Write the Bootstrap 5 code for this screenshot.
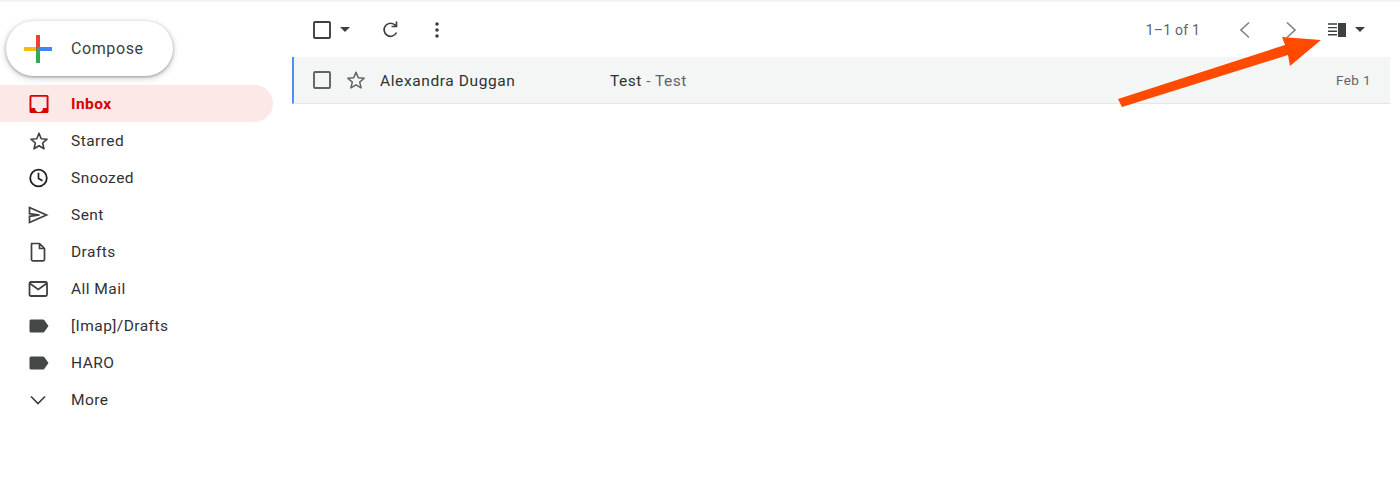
<!DOCTYPE html>
<html lang="en">
<head>
    <meta charset="UTF-8">
    <meta name="viewport" content="width=device-width, initial-scale=1.0">
    <title>Inbox</title>
    <link href="https://cdn.jsdelivr.net/npm/bootstrap@5.3.3/dist/css/bootstrap.min.css" rel="stylesheet">
    <style>
        body {
            font-family: Roboto, "Liberation Sans", sans-serif;
            font-size: 15.5px;
            color: #202124;
            background: #fff;
            height: 503px;
            overflow: hidden;
            border-top: 2px solid #f1f3f4;
            position: relative;
        }
        .side-col { width: 292px; flex: none; padding-top: 19px; }
        .main-col { width: 1098px; flex: none; }
        .compose-btn {
            width: 167px;
            height: 55px;
            margin-left: 6px;
            margin-bottom: 9px;
            padding: 0 0 0 17px;
            gap: 18px;
            border: 0;
            border-radius: 28px;
            background: #fff;
            color: #3c4043;
            font-size: 16px;
            font-weight: 400;
            letter-spacing: .6px;
            box-shadow: 0 1px 3px rgba(60,64,67,.45), 0 2px 6px 1px rgba(60,64,67,.18);
        }
        .folder-list { margin: 0; padding: 0; list-style: none; }
        .folder-item {
            width: 273px;
            height: 37px;
            padding: 2px 0 0 28px;
            gap: 21px;
            color: #303134;
            letter-spacing: .45px;
            border-radius: 0 19px 19px 0;
        }
        .folder-item svg { flex: none; margin-top: -2px; }
        .folder-active { background: #fce8e6; color: #d90000; font-weight: 700; }
        .mail-tools { height: 55px; }
        .tool-glyph { flex: none; display: block; }
        .caret-down {
            width: 0; height: 0;
            border-left: 5px solid transparent;
            border-right: 5px solid transparent;
            border-top: 5px solid #3c4043;
        }
        .page-count { font-size: 14px; color: #5f6368; letter-spacing: .2px; padding-top: 1px; }
        .mail-row {
            height: 47px;
            background: #f4f6f6;
            border-left: 2px solid #4d90f0;
            border-bottom: 1px solid #e3e5e6;
            box-sizing: border-box;
        }
        .mail-from { width: 230px; letter-spacing: .6px; padding-top: 4px; color: #303134; }
        .mail-subject { letter-spacing: .5px; padding-top: 4px; color: #303134; }
        .mail-snippet { color: #5f6368; }
        .mail-date { font-size: 13.5px; color: #5f6368; margin-right: 19px; letter-spacing: .4px; }
        .orange-arrow { position: absolute; left: 0; top: -2px; pointer-events: none; }
    </style>
</head>
<body>
    <div class="d-flex">
        <div class="side-col">
            <button type="button" class="btn compose-btn d-flex align-items-center">
                <svg width="30" height="30" viewBox="0 0 30 30">
                    <rect x="13" y="1" width="4" height="14" fill="#ea4335"/>
                    <rect x="15" y="13" width="14" height="4" fill="#4285f4"/>
                    <rect x="13" y="15" width="4" height="14" fill="#34a853"/>
                    <rect x="1" y="13" width="12" height="4" fill="#fbbc04"/>
                </svg>
                Compose
            </button>
            <ul class="folder-list">
                <li class="folder-item folder-active d-flex align-items-center">
                    <svg width="22" height="22" viewBox="0 0 22 22"><path d="M3 2h16A1.500 1.500 0 0 1 20.500 3.500v15a1.500 1.500 0 0 1-1.500 1.500H3a1.500 1.500 0 0 1-1.500-1.500v-15A1.500 1.500 0 0 1 3 2zM3.400 3.800V15h3.700a3.900 3.900 0 0 0 7.800 0h3.700V3.800z" fill="#d90000" fill-rule="evenodd"/></svg>
                    Inbox
                </li>
                <li class="folder-item d-flex align-items-center">
                    <svg width="22" height="22" viewBox="0 0 22 22"><path d="M11 3.200l2.200 5.500 5.900.5-4.500 3.800 1.400 5.800-5-3.100-5 3.100 1.400-5.800-4.500-3.800 5.900-.5z" fill="none" stroke="#3c4043" stroke-width="1.600" stroke-linejoin="round"/></svg>
                    Starred
                </li>
                <li class="folder-item d-flex align-items-center">
                    <svg width="22" height="22" viewBox="0 0 22 22"><circle cx="10.500" cy="11" r="8.300" fill="none" stroke="#202124" stroke-width="1.800"/><path d="M10.500 5.800v5.600l4 2.400" fill="none" stroke="#202124" stroke-width="1.700"/></svg>
                    Snoozed
                </li>
                <li class="folder-item d-flex align-items-center">
                    <svg width="22" height="22" viewBox="0 0 22 22"><path d="M1.500 3.500L18.500 11 1.500 18.500v-6.200l10-1.300-10-1.300z" fill="none" stroke="#3c4043" stroke-width="1.700" stroke-linejoin="miter"/></svg>
                    Sent
                </li>
                <li class="folder-item d-flex align-items-center">
                    <svg width="22" height="22" viewBox="0 0 22 22"><path d="M3.500 2.500h8l5 5v11a1.300 1.300 0 0 1-1.300 1.300H4.800a1.300 1.300 0 0 1-1.300-1.300V3.800a1.300 1.300 0 0 1 1.300-1.300zM11.500 2.500v5h5" fill="none" stroke="#3c4043" stroke-width="1.700" stroke-linejoin="round"/></svg>
                    Drafts
                </li>
                <li class="folder-item d-flex align-items-center">
                    <svg width="22" height="22" viewBox="0 0 22 22"><rect x="1.500" y="4" width="17.500" height="14" rx="1.500" fill="none" stroke="#3c4043" stroke-width="1.800"/><path d="M2 5.500l8.250 6 8.250-6" fill="none" stroke="#3c4043" stroke-width="1.700"/></svg>
                    All Mail
                </li>
                <li class="folder-item d-flex align-items-center">
                    <svg width="22" height="22" viewBox="0 0 22 22"><path d="M3 4.500h12a1.500 1.500 0 0 1 1.200.6l4.300 5.900-4.300 5.900a1.500 1.500 0 0 1-1.200.6H3a1.500 1.500 0 0 1-1.500-1.500V6A1.500 1.500 0 0 1 3 4.500z" fill="#444746"/></svg>
                    [Imap]/Drafts
                </li>
                <li class="folder-item d-flex align-items-center">
                    <svg width="22" height="22" viewBox="0 0 22 22"><path d="M3 4.500h12a1.500 1.500 0 0 1 1.200.6l4.300 5.900-4.300 5.900a1.500 1.500 0 0 1-1.200.6H3a1.500 1.500 0 0 1-1.500-1.500V6A1.500 1.500 0 0 1 3 4.500z" fill="#444746"/></svg>
                    HARO
                </li>
                <li class="folder-item d-flex align-items-center">
                    <svg width="22" height="22" viewBox="0 0 22 22"><path d="M3 7.500l7 7 7-7" fill="none" stroke="#3c4043" stroke-width="1.700"/></svg>
                    More
                </li>
            </ul>
        </div>
        <div class="main-col">
            <div class="mail-tools d-flex align-items-center">
                <svg class="tool-glyph" style="margin-left:21px" width="18" height="18" viewBox="0 0 18 18"><rect x="1" y="1" width="16" height="16" rx="1" fill="none" stroke="#3c4043" stroke-width="1.900"/></svg>
                <span class="caret-down tool-glyph" style="margin-left:9px"></span>
                <svg class="tool-glyph" style="margin-left:31px" width="20" height="20" viewBox="0 0 20 20"><path d="M15.500 12.500a6.500 6.500 0 1 1-1-7M15.500 1.500v5h-5" fill="none" stroke="#3c4043" stroke-width="1.700"/></svg>
                <svg class="tool-glyph" style="margin-left:33px" width="6" height="18" viewBox="0 0 6 18"><circle cx="3" cy="3" r="1.800" fill="#3c4043"/><circle cx="3" cy="9" r="1.800" fill="#3c4043"/><circle cx="3" cy="15" r="1.800" fill="#3c4043"/></svg>
                <span class="page-count ms-auto">1–1 of 1</span>
                <svg class="tool-glyph" style="margin-left:39px" width="12" height="18" viewBox="0 0 12 18"><path d="M10 1.500L2 9l8 7.500" fill="none" stroke="#80868b" stroke-width="1.700"/></svg>
                <svg class="tool-glyph" style="margin-left:34px" width="12" height="18" viewBox="0 0 12 18"><path d="M2 1.500L10 9l-8 7.500" fill="none" stroke="#80868b" stroke-width="1.700"/></svg>
                <svg class="tool-glyph" style="margin-left:31px" width="18" height="14" viewBox="0 0 18 14"><path d="M0 1h9M0 4.600h9M0 8.200h9M0 11.800h9" stroke="#3c4043" stroke-width="1.400"/><rect x="10" y="0" width="8" height="14" fill="#3c4043"/></svg>
                <span class="caret-down tool-glyph" style="margin-left:9px;margin-right:25px"></span>
            </div>
            <div class="mail-row d-flex align-items-center">
                <svg class="tool-glyph" style="margin-left:19px" width="18" height="18" viewBox="0 0 18 18"><rect x="1" y="1" width="16" height="16" rx="1" fill="none" stroke="#5f6368" stroke-width="1.900"/></svg>
                <svg class="tool-glyph" style="margin-left:15px" width="20" height="20" viewBox="0 0 20 20"><path d="M10 2.200l2.300 5.500 5.900.5-4.500 3.900 1.400 5.800-5.100-3.100-5.100 3.100 1.400-5.800-4.500-3.900 5.900-.5z" fill="none" stroke="#5f6368" stroke-width="1.500" stroke-linejoin="round"/></svg>
                <span class="mail-from" style="margin-left:14px">Alexandra Duggan</span>
                <span class="mail-subject">Test <span class="mail-snippet">- Test</span></span>
                <span class="mail-date ms-auto">Feb 1</span>
            </div>
        </div>
    </div>
    <svg class="orange-arrow" width="1400" height="120" viewBox="0 0 1400 120"><polygon points="1118,99 1122,107 1288,55 1290,66 1321,40 1282,37 1285,45" fill="#ff4a00"/></svg>

    <script src="https://cdn.jsdelivr.net/npm/bootstrap@5.3.3/dist/js/bootstrap.bundle.min.js"></script>
</body>
</html>
